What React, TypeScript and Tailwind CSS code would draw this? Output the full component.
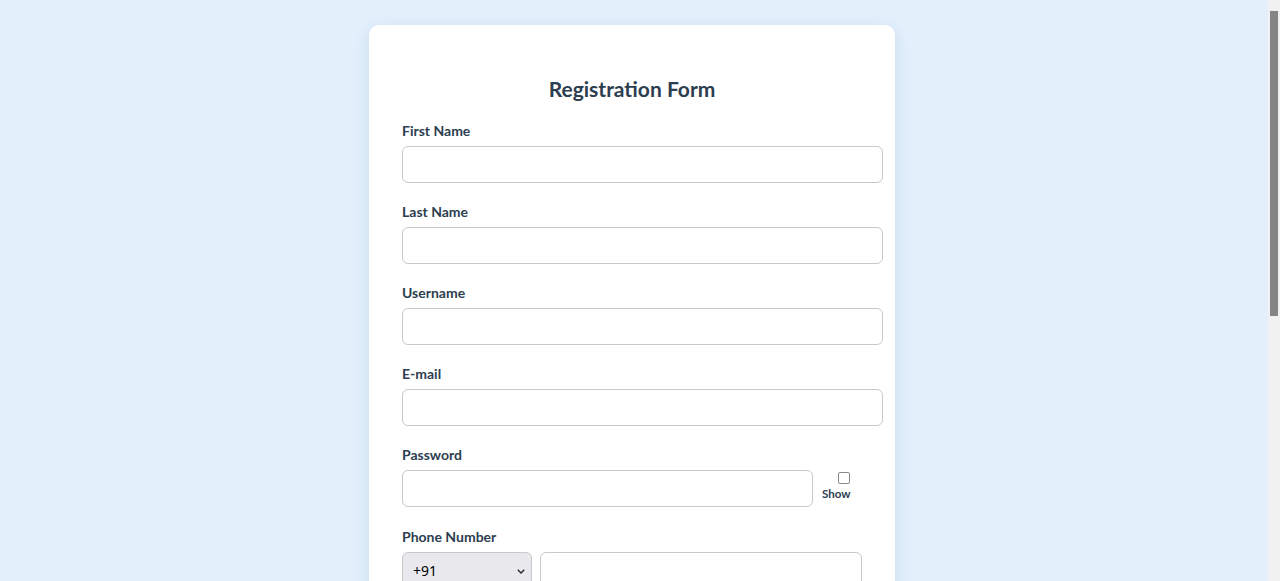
import React from "react";

const font = { fontFamily: "Lato, 'Noto Sans', sans-serif" };

function Field({ label }: { label: string }) {
  return (
    <div className="flex flex-col">
      <label className="text-[14px] leading-[18px] font-bold text-[#2c3e50]">{label}</label>
      <input
        type="text"
        className="mt-[6px] w-[481px] h-[37px] rounded-[6px] border border-[#c9c9c9] bg-white px-3 outline-none"
      />
    </div>
  );
}

export default function App() {
  return (
    <div className="flex h-screen w-full overflow-hidden bg-[#e3f0fc]" style={font}>
      <div className="flex-1 overflow-y-auto [scrollbar-width:none]">
        <div className="flex justify-center pr-1 pt-[25px] pb-[40px]">
          <div className="w-[526px] rounded-[10px] bg-white pl-[33px] pr-[12px] pt-[50px] pb-[40px] shadow-[0_4px_16px_rgba(80,120,170,0.18)]">
            <h1 className="text-center text-[21px] leading-[28px] font-bold text-[#2c3e50] pr-[21px]">
              Registration Form
            </h1>
            <div className="mt-[19px] flex flex-col gap-[20px]">
              <Field label="First Name" />
              <Field label="Last Name" />
              <Field label="Username" />
              <Field label="E-mail" />
              <div className="flex flex-col">
                <label className="text-[14px] leading-[18px] font-bold text-[#2c3e50]">Password</label>
                <div className="mt-[6px] flex items-start">
                  <input
                    type="password"
                    className="w-[411px] h-[37px] rounded-[6px] border border-[#c9c9c9] bg-white px-3 outline-none"
                  />
                  <div className="ml-[9px] mt-[2px] flex flex-col items-end">
                    <input type="checkbox" className="h-[12px] w-[12px] appearance-none rounded-[2px] border border-[#8a8a8a] bg-white" />
                    <span className="mt-[3px] text-[11.5px] leading-[14px] font-bold text-[#2c3e50]">Show</span>
                  </div>
                </div>
              </div>
              <div className="flex flex-col mt-[1px]">
                <label className="text-[14px] leading-[18px] font-bold text-[#2c3e50]">Phone Number</label>
                <div className="mt-[6px] flex gap-[8px]">
                  <div className="relative w-[130px] h-[37px]">
                    <select className="h-full w-full appearance-none rounded-[6px] border border-[#c9c9c9] bg-[#e9e9ed] pl-[10px] text-[14px] text-black outline-none" style={{ fontFamily: "'Noto Sans', sans-serif" }}>
                      <option>+91</option>
                      <option>+1</option>
                      <option>+44</option>
                    </select>
                    <svg className="pointer-events-none absolute right-[7px] top-[17px]" width="8" height="5" viewBox="0 0 8 5" fill="none">
                      <path d="M0.8 0.8 L4 4 L7.2 0.8" stroke="#222" strokeWidth="1.3" />
                    </svg>
                  </div>
                  <input
                    type="tel"
                    className="w-[322px] h-[37px] rounded-[6px] border border-[#c9c9c9] bg-white px-3 outline-none"
                  />
                </div>
              </div>
              <div className="flex flex-col">
                <label className="text-[14px] leading-[18px] font-bold text-[#2c3e50]">Gender</label>
                <div className="mt-[7px] flex gap-6 text-[13px] text-[#2c3e50]">
                  <label className="flex items-center gap-1"><input type="radio" name="g" /> Male</label>
                  <label className="flex items-center gap-1"><input type="radio" name="g" /> Female</label>
                  <label className="flex items-center gap-1"><input type="radio" name="g" /> Other</label>
                </div>
              </div>
              <Field label="Date of Birth" />
              <div className="flex flex-col">
                <label className="text-[14px] leading-[18px] font-bold text-[#2c3e50]">Address</label>
                <textarea className="mt-[7px] w-[481px] h-[80px] rounded-[6px] border border-[#c9c9c9] bg-white px-3 outline-none" />
              </div>
              <button className="mt-2 w-[481px] h-[40px] rounded-[6px] bg-[#2c7be5] text-white font-bold text-[15px]">
                Register
              </button>
            </div>
          </div>
        </div>
      </div>
      <div className="w-[12px] shrink-0 bg-[#f1f1f1] pt-[11px] px-[2px]">
        <div className="h-[305px] w-[8px] bg-[#858585]" />
      </div>
    </div>
  );
}
